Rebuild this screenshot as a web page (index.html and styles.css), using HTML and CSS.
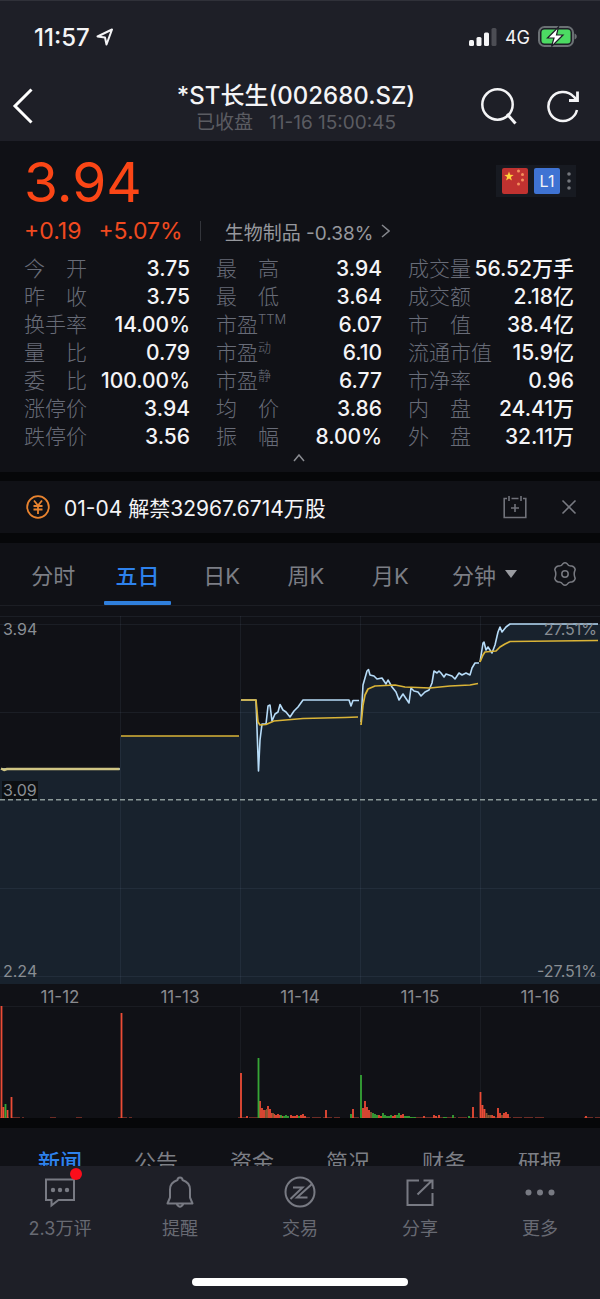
FILE: index.html
```html
<!DOCTYPE html>
<html lang="zh-CN">
<head>
<meta charset="utf-8">
<meta name="viewport" content="width=device-width, initial-scale=1">
<title>*ST长生(002680.SZ)</title>
<link rel="stylesheet" href="styles.css">
</head>
<body>
<header class="top">
  <div class="status">
    <div class="status-time">
      <span>11:57</span>
      <svg width="18" height="18" viewBox="0 0 18 18" fill="none" stroke="#f4f4f6" stroke-width="2" stroke-linejoin="round"><path d="M1.500 8.500 16 1.500 10.500 16.500 9 9.500Z"/></svg>
    </div>
    <div class="status-icons">
      <svg width="28" height="20" viewBox="0 0 28 20" fill="#f4f4f6"><rect x="0" y="13" width="5" height="6" rx="1.500"/><rect x="7.500" y="10" width="5" height="9" rx="1.500"/><rect x="15" y="5.500" width="5" height="13.500" rx="1.500"/><rect x="22.500" y="1" width="5" height="18" rx="1.500" fill="#4c4d54"/></svg>
      <span>4G</span>
      <svg width="40" height="22" viewBox="0 0 40 22"><rect x="1" y="1" width="34" height="19" rx="5.500" fill="none" stroke="#6b7074" stroke-width="2"/><path d="M36.500 7.500c3 1 3 5 0 6Z" fill="#6b7074"/><rect x="3.500" y="3.500" width="29" height="14" rx="3" fill="#4cdb63"/><path d="M20.500 1 9.500 12h6.500l-2.500 8.500L25 9h-6.500Z" fill="#fff" stroke="#1e1f27" stroke-width="1.200"/></svg>
    </div>
  </div>
  <div class="titlebar">
    <button class="icon-btn back" aria-label="返回"><svg width="22" height="36" viewBox="0 0 22 36" fill="none" stroke="#fff" stroke-width="3"><path d="M19.500 1.500 3 18l16.500 16.500"/></svg></button>
    <div class="title">
      <h1>*ST长生(002680.SZ)</h1>
      <p><span>已收盘</span><span>11-16 15:00:45</span></p>
    </div>
    <div class="title-actions">
      <button class="icon-btn" aria-label="搜索"><svg width="38" height="38" viewBox="0 0 38 38" fill="none" stroke="#f4f4f6" stroke-width="2.500"><circle cx="17.500" cy="17.500" r="15.200"/><path d="m27 27 8.500 9.500" stroke-width="3"/></svg></button>
      <button class="icon-btn" aria-label="刷新"><svg width="34" height="38" viewBox="0 0 34 38" fill="none" stroke="#f4f4f6" stroke-width="2.500"><path d="M31 23a14.500 14.500 0 1 1-3.500-13.500l3 3"/><path d="M31.500 4.500v9h-8.500" stroke-width="2.800"/></svg></button>
    </div>
  </div>
</header>

<main>
  <section class="quote">
    <div class="price-row">
      <strong class="price">3.94</strong>
      <button class="badges" aria-label="行情级别">
        <svg width="26" height="26" viewBox="0 0 26 26"><rect width="26" height="26" rx="2" fill="#c03230"/><path d="m7 3.500 1.200 3.300 3.500.1-2.800 2.100 1 3.400L7 10.400l-2.900 2 1-3.400-2.800-2.100 3.500-.1Z" fill="#ffd23c"/><g fill="#f3905c"><circle cx="16.500" cy="3" r="1.500"/><circle cx="20.500" cy="6.500" r="1.500"/><circle cx="20.500" cy="12" r="1.500"/><circle cx="16.500" cy="16" r="1.500"/></g></svg>
        <span class="level">L1</span>
        <svg width="6" height="20" viewBox="0 0 6 20" fill="#74777d"><circle cx="3" cy="3" r="1.800"/><circle cx="3" cy="10" r="1.800"/><circle cx="3" cy="17" r="1.800"/></svg>
      </button>
    </div>
    <div class="change-row">
      <span class="up">+0.19</span><span class="up">+5.07%</span>
      <i class="divider"></i>
      <a class="sector" href="#sector">生物制品 -0.38%<svg width="9" height="14" viewBox="0 0 9 14" fill="none" stroke="#85878d" stroke-width="1.500"><path d="m1 1 7 6-7 6"/></svg></a>
    </div>
    <div class="stats">
      <dl>
        <div><dt>今　开</dt><dd>3.75</dd></div>
        <div><dt>昨　收</dt><dd>3.75</dd></div>
        <div><dt>换手率</dt><dd>14.00%</dd></div>
        <div><dt>量　比</dt><dd>0.79</dd></div>
        <div><dt>委　比</dt><dd>100.00%</dd></div>
        <div><dt>涨停价</dt><dd>3.94</dd></div>
        <div><dt>跌停价</dt><dd>3.56</dd></div>
      </dl>
      <dl>
        <div><dt>最　高</dt><dd>3.94</dd></div>
        <div><dt>最　低</dt><dd>3.64</dd></div>
        <div><dt>市盈<sup>TTM</sup></dt><dd>6.07</dd></div>
        <div><dt>市盈<sup>动</sup></dt><dd>6.10</dd></div>
        <div><dt>市盈<sup>静</sup></dt><dd>6.77</dd></div>
        <div><dt>均　价</dt><dd>3.86</dd></div>
        <div><dt>振　幅</dt><dd>8.00%</dd></div>
      </dl>
      <dl>
        <div><dt>成交量</dt><dd>56.52万手</dd></div>
        <div><dt>成交额</dt><dd>2.18亿</dd></div>
        <div><dt>市　值</dt><dd>38.4亿</dd></div>
        <div><dt>流通市值</dt><dd>15.9亿</dd></div>
        <div><dt>市净率</dt><dd>0.96</dd></div>
        <div><dt>内　盘</dt><dd>24.41万</dd></div>
        <div><dt>外　盘</dt><dd>32.11万</dd></div>
      </dl>
    </div>
    <button class="collapse" aria-label="收起"><svg width="12" height="8" viewBox="0 0 12 8" fill="none" stroke="#8b8d92" stroke-width="1.500"><path d="m1 7 5-6 5 6"/></svg></button>
  </section>

  <section class="notice">
    <svg width="24" height="24" viewBox="0 0 24 24" fill="none" stroke="#e8832f" stroke-width="1.800"><circle cx="12" cy="12" r="10.800"/><path d="m8 5.500 4 5 4-5M12 10.500v8.500M7.500 11h9M7.500 14.500h9"/></svg>
    <p>01-04 解禁32967.6714万股</p>
    <button class="icon-btn" aria-label="添加提醒"><svg width="24" height="24" viewBox="0 0 24 24" fill="none" stroke="#70727a" stroke-width="1.600"><path d="M4 3.500H1.200V22.500h21.600V3.500H20M8.500 3.500h7M6 1v5M18 1v5M12 9v8M8 13h8"/></svg></button>
    <button class="icon-btn" aria-label="关闭"><svg width="16" height="16" viewBox="0 0 16 16" fill="none" stroke="#787a81" stroke-width="1.600"><path d="m1.500 1.500 13 13m0-13-13 13"/></svg></button>
  </section>

  <nav class="periods">
    <button>分时</button>
    <button class="active">五日</button>
    <button>日K</button>
    <button>周K</button>
    <button>月K</button>
    <button>分钟<svg width="12" height="8" viewBox="0 0 12 8" fill="#9a9ca1"><path d="M0 0h12L6 8Z"/></svg></button>
    <button aria-label="设置"><svg width="24" height="26" viewBox="0 0 24 26" fill="none" stroke="#787a81" stroke-width="1.500" stroke-linejoin="round"><path d="M9.800 2.800Q12 .8 14.200 2.800Q15.800 5.600 18.800 5Q21.600 5.600 22.200 8.600Q20.200 13 22.200 17.400Q21.600 20.400 18.800 21Q15.800 20.400 14.200 23.200Q12 25.200 9.800 23.200Q8.200 20.400 5.200 21Q2.400 20.400 1.800 17.400Q3.800 13 1.800 8.600Q2.400 5.600 5.200 5Q8.200 5.600 9.800 2.800Z"/><circle cx="12" cy="13" r="3.200"/></svg></button>
  </nav>

  <section class="chart">
    <svg class="price-plot" viewBox="0 616 600 368" preserveAspectRatio="none" fill="none">
      <path fill="#18222d" d="M0 984V769H120V736H240V700H256L258.500 722 262 724 266 724 268 706 270 705 272 721 275 714 278 712 280 704.500 283 710 286 712 290 717 294 711 298 707 303 700H360L363 685 365 678 368.500 669.500 370 675 374 676 377 679 382 678 386 684 395 685 405 687 430 688 432 683 434 671 441 672 444 677 446 674 452 676 455 679 459 673 466 673 470 675 472 668 475 663H480L483 643 484 642 486 650 488 647 492 653 495 645 498 632 500 627 502 632 506 627 510 624H600V984Z"/>
      <path stroke="#7f95af" stroke-opacity=".1" d="M0 616.500H600M0 624.500H600M0 712.500H600M0 888.500H600M0 976.500H600M120.500 616V984M240.500 616V984M360.500 616V984M480.500 616V984"/>
      <path stroke="#8c9a99" stroke-width="1.500" stroke-dasharray="5 3" d="M0 799.700H600"/>
      <g stroke="#b7dcf8" stroke-width="1.600" stroke-linejoin="round">
        <path d="M2 769H120"/>
        <path d="M241 700H256L258.500 771 260 740 262 724 266 724 268 706 270 705 272 721 275 714 278 712 280 704.500 283 710 286 712 290 717 294 711 298 707 303 700H349L351 706 353 700.500H359"/>
        <path d="M361 722 363 685 365 678 367 671 368.500 669.500 370 675 374 676 377 679 382 678 386 684 388 680 392 687 396 692 399 700 403 694 407 700 409 703 411 688 414 691 418 692 421 696 425 692 429 690 432 683 434 671 437 673 439 671 441 673 444 677 446 674 452 676 455 679 459 673 462 675 466 673 470 675 472 668 475 663H479"/>
        <path d="M480 662 483 643 484 642 486 650 488 647 492 653 495 645 498 632 500 627 502 632 506 627 510 624H598"/>
      </g>
      <g stroke="#dab437" stroke-width="1.700" stroke-linejoin="round">
        <path stroke="#d1c684" stroke-width="2.400" d="M1 768.500 4 770 7 769H119.500"/>
        <path d="M121 736H239"/>
        <path d="M241 700H256L258 722 260 725 266 724.500 274 721 303 718.500 345 717.500 358 717"/>
        <path d="M361 725 363 705 365 695 368 689 375 686 395 685 405 687 430 688 450 686 470 685 478 683.500"/>
        <path d="M480 662 483 655 485 652 496 651 500 647 505 644 510 641.500 555 641 598 640.500"/>
      </g>
    </svg>
    <span class="mark mark-high">3.94</span>
    <span class="mark mark-mid">3.09</span>
    <span class="mark mark-low">2.24</span>
    <span class="mark mark-gain">27.51%</span>
    <span class="mark mark-loss">-27.51%</span>
  </section>
  <div class="dates"><span>11-12</span><span>11-13</span><span>11-14</span><span>11-15</span><span>11-16</span></div>
  <svg class="volume-plot" viewBox="0 0 600 112" preserveAspectRatio="none" fill="none" stroke-width="1.800">
    <path stroke="#1a1c22" stroke-width="1" d="M0 .5H600M240.500 0V112M360.500 0V112M480.500 0V112"/>
    <path stroke="#6c2c26" stroke-width="1" d="M0 111.500H24M50 111.500H56M76 111.500H82M118 111.500H132M238 111.500H262M290 111.500H340M350 111.500H365M370 111.500H545M584 111.500H600" stroke-dasharray="9 2"/>
    <path stroke="#ec4c36" d="M1.500 112V0M3.500 112V101M7.500 112V104M11.500 112V91M121.500 112V7M241 112V67M247 112V110M260 112V95M262 112V102M264 112V104M268 112V100M270 112V103M272 112V107M274 112V108M276 112V109M278 112V108M280 112V109M282 112V110M291 112V109M293 112V110M295 112V110M297 112V109M301 112V109M303 112V108M305 112V110M326 112V104M353 112V103M363 112V102M365 112V95M367 112V101M369 112V104M379 112V109M381 112V110M393 112V110M395 112V109M401 112V109M403 112V108M424 112V110M434 112V109M436 112V110M439 112V109M473 112V101M480.500 112V86M482.500 112V99M484.500 112V103M492 112V109M494 112V110M498 112V102M500 112V107M504 112V107M506 112V106M508 112V108M586 112V110"/>
    <path stroke="#8b5832" d="M266 112V104M267 112V103M273 112V107M371 112V106M486.500 112V107M488.500 112V109M490.500 112V109M502 112V109"/>
    <path stroke="#36a536" d="M5.500 112V98M258.500 112V52M281 112V109M284 112V110M286 112V109M288 112V110M299 112V110M351 112V108M361 112V69M373 112V107M375 112V108M377 112V109M383 112V107M385 112V109M387 112V110M389 112V110M391 112V109M397 112V109M399 112V107M405 112V110M407 112V110M409 112V110M411 112V111M413 112V111M415 112V111M444 112V111M446 112V111M453 112V109M469 112V110"/>
  </svg>

  <nav class="news-tabs">
    <a class="active" href="#news">新闻</a><a href="#announce">公告</a><a href="#funds">资金</a><a href="#brief">简况</a><a href="#finance">财务</a><a href="#reports">研报</a>
  </nav>
</main>

<footer class="bottom">
  <nav class="actions">
    <button>
      <span class="action-icon"><svg width="32" height="32" viewBox="0 0 32 32" fill="none" stroke="#787a83" stroke-width="2"><path d="M2 3.500H30V24H14.500L7.500 29.500V24H2Z"/><g fill="#787a83" stroke="none"><circle cx="9" cy="14" r="2.200"/><circle cx="16" cy="14" r="2.200"/><circle cx="23" cy="14" r="2.200"/></g></svg><i class="dot"></i></span>
      2.3万评
    </button>
    <button>
      <span class="action-icon"><svg width="32" height="32" viewBox="0 0 32 32" fill="none" stroke="#787a83" stroke-width="2" stroke-linejoin="round"><path d="M13.500 4Q13.500 1.500 16 1.500t2.500 2.500Q26 6.500 26 13.500v8l2.500 6H3.500L6 21.500v-8Q6 6.500 13.500 4ZM12.500 27.500Q16 34 19.500 27.500"/></svg></span>
      提醒
    </button>
    <button>
      <span class="action-icon"><svg width="32" height="32" viewBox="0 0 32 32" fill="none" stroke="#787a83" stroke-width="2"><circle cx="16" cy="16" r="14.500"/><path d="M9 11.500H18.500L6.500 23M28 8 13 21.500H23.500"/></svg></span>
      交易
    </button>
    <button>
      <span class="action-icon"><svg width="32" height="32" viewBox="0 0 32 32" fill="none" stroke="#787a83" stroke-width="2"><path d="M15 4.500H3.500V29H28.500V17M13.500 18.500 28 4.500M19.500 4.500H28.500V13"/></svg></span>
      分享
    </button>
    <button>
      <span class="action-icon"><svg width="32" height="32" viewBox="0 0 32 32" fill="#787a83"><circle cx="4.500" cy="16.500" r="3"/><circle cx="16" cy="16.500" r="3"/><circle cx="27.500" cy="16.500" r="3"/></svg></span>
      更多
    </button>
  </nav>
  <div class="home-bar"></div>
</footer>
</body>
</html>
```
FILE: styles.css
```css
* { box-sizing: border-box; }

body {
  margin: 0;
  background: #060709;
  color: #f4f4f6;
  font-family: Inter, "Noto Sans CJK SC", sans-serif;
}

button {
  border: 0;
  padding: 0;
  background: none;
  color: inherit;
  font: inherit;
}

a { color: inherit; text-decoration: none; }
svg { display: block; flex: none; }
h1, p, dl, dd { margin: 0; }

.top {
  background: #1e1f27;
  border-top: 1px solid #303139;
}

.status {
  display: flex;
  justify-content: space-between;
  align-items: center;
  height: 70px;
  padding: 2px 22px 0 34px;
}

.status-time,
.status-icons {
  display: flex;
  align-items: center;
  gap: 6px;
}

.status-time { font-size: 24px; font-weight: 500; }
.status-icons { gap: 8px; font-size: 18px; }

.titlebar {
  display: grid;
  grid-template-columns: 1fr auto 1fr;
  align-items: center;
  height: 70px;
  padding: 0 20px 0 12px;
}

.icon-btn { display: flex; align-items: center; justify-content: center; }
.back { justify-self: start; }
.title { padding-top: 6px; text-align: center; }

.title h1 {
  font-size: 24px;
  font-weight: 500;
  line-height: 28px;
}

.title p {
  display: flex;
  justify-content: center;
  gap: 16px;
  color: #5b5c62;
  font-size: 19px;
  line-height: 26px;
}

.title-actions {
  display: flex;
  justify-content: flex-end;
  gap: 28px;
}

.quote {
  background: #101116;
  padding: 15px 26px 0 24px;
}

.price-row {
  display: flex;
  justify-content: space-between;
  align-items: flex-start;
}

.price {
  color: #fb4616;
  font-size: 55px;
  font-weight: 400;
  line-height: 52px;
}

.badges {
  display: flex;
  align-items: center;
  gap: 6px;
  height: 32px;
  margin: 9px -2px 0 0;
  padding: 0 4px 0 6px;
  background: #171a21;
}

.level {
  width: 26px;
  border-radius: 2px;
  background: #3f73d3;
  font-size: 16px;
  line-height: 26px;
}

.change-row {
  display: flex;
  align-items: center;
  height: 46px;
}

.up {
  margin-right: 17px;
  color: #f04a20;
  font-size: 23px;
}

.divider {
  width: 1px;
  height: 20px;
  margin-right: 24px;
  background: #33353b;
}

.sector {
  display: flex;
  align-items: center;
  gap: 8px;
  color: #96989d;
  font-size: 19px;
}

.stats {
  display: grid;
  grid-template-columns: repeat(3, 1fr);
  gap: 26px;
  padding-top: 1px;
}

.stats dl > div {
  display: flex;
  justify-content: space-between;
  height: 28px;
  line-height: 28px;
  white-space: nowrap;
}

.stats dt { color: #686c78; font-size: 21px; font-weight: 300; }
.stats dd { font-size: 21px; font-weight: 500; }

.stats sup {
  font-size: 13px;
  line-height: 0;
  vertical-align: 8px;
}

.collapse {
  display: flex;
  justify-content: center;
  width: 100%;
  height: 21px;
  padding-top: 3px;
}

.notice {
  display: flex;
  align-items: center;
  height: 52px;
  margin: 9px 0 10px;
  padding: 0 23px 0 26px;
  background: #101116;
}

.notice p { flex: 1; margin-left: 14px; font-size: 21px; }
.notice .icon-btn + .icon-btn { margin-left: 34px; }

.periods {
  display: grid;
  grid-template-columns: repeat(5, 84fr) 104fr 56fr;
  height: 63px;
  padding: 0 7px 0 11px;
  background: #101116;
  border-bottom: 1px solid #1c1e24;
  color: #7c7e85;
  font-size: 22px;
}

.periods button {
  position: relative;
  display: flex;
  align-items: center;
  justify-content: center;
  gap: 9px;
}

.periods .active { color: #2e82ed; font-weight: 500; }

.periods .active::after {
  content: "";
  position: absolute;
  right: 9px;
  bottom: 0;
  left: 9px;
  height: 4px;
  border-radius: 1px;
  background: #2f7fdc;
}

.chart {
  position: relative;
  padding-top: 10px;
  background: #101116;
}

.price-plot { width: 100%; height: 368px; }

.mark {
  position: absolute;
  padding: 0 1px;
  color: #898e94;
  font-size: 16px;
  line-height: 18px;
}

.mark-high { top: 14px; left: 2px; }
.mark-mid { top: 175px; left: 2px; background: #0c0f12; }
.mark-low { top: 356px; left: 2px; }
.mark-gain { top: 14px; right: 2px; }
.mark-loss { top: 356px; right: 2px; }

.dates {
  display: grid;
  grid-template-columns: repeat(5, 1fr);
  height: 22px;
  padding-top: 2px;
  background: #101116;
  color: #898a8f;
  font-size: 17px;
  line-height: 22px;
  text-align: center;
}

.volume-plot {
  width: 100%;
  height: 112px;
  background: #101116;
}

.news-tabs {
  display: grid;
  grid-template-columns: repeat(6, 1fr);
  margin-top: 10px;
  padding: 18px 12px 12px;
  background: #101116;
  color: #7c7e85;
  font-size: 22px;
  line-height: 32px;
  text-align: center;
}

.news-tabs .active { color: #2e82ed; font-weight: 500; }

.bottom {
  position: fixed;
  right: 0;
  bottom: 0;
  left: 0;
  padding: 10px 0 13px;
  background: #1e1f27;
}

.actions {
  display: grid;
  grid-template-columns: repeat(5, 1fr);
  color: #686a73;
  font-size: 18px;
  line-height: 26px;
}

.actions button {
  display: flex;
  flex-direction: column;
  align-items: center;
  gap: 8px;
}

.action-icon { position: relative; }

.dot {
  position: absolute;
  top: -8px;
  right: -6px;
  width: 12px;
  height: 12px;
  border-radius: 50%;
  background: #fb0d1b;
}

.home-bar {
  width: 36%;
  height: 8px;
  margin: 36px auto 0;
  border-radius: 4px;
  background: #fff;
}
```
